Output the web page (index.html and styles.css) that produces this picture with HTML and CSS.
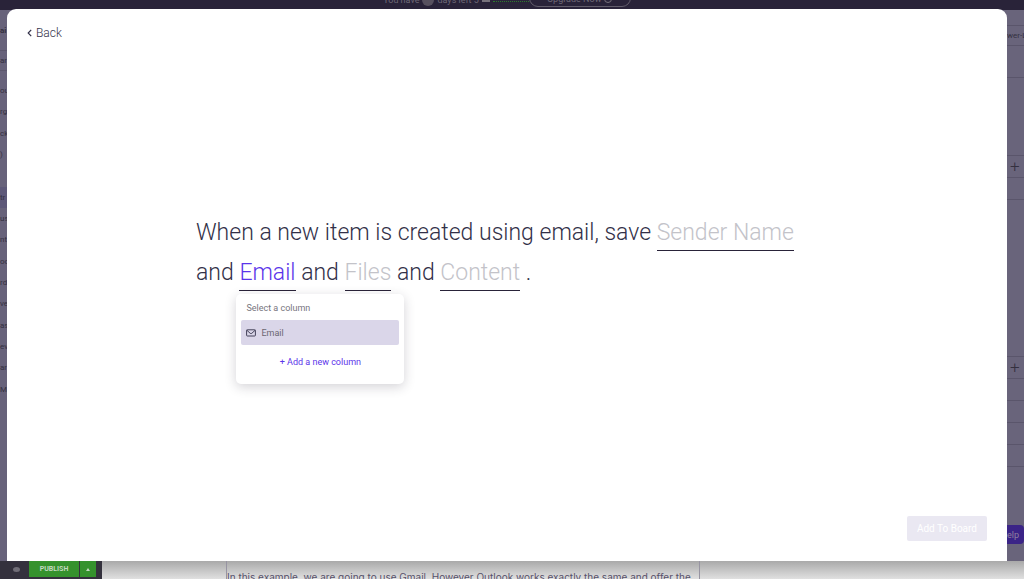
FILE: index.html
```html
<!DOCTYPE html>
<html lang="en">
  <head>
    <meta charset="UTF-8" />
    <title>Board automations</title>
    <link rel="stylesheet" href="styles.css">
  </head>
  <body>
    <div class="page">
      <header class="topbar">
        <div class="trial">You have <span class="trial-count"></span> days left 5 <span class="trial-mark"></span><span class="trial-dots"></span></div>
        <a class="upgrade" href="#">Upgrade Now <span class="upgrade-ring"></span></a>
      </header>

      <div class="workspace">
        <nav class="sidebar">
          <div class="side-title">ai</div>
          <div class="side-search">ar</div>
          <ul class="side-list">
            <li>ou</li>
            <li>rg</li>
            <li>ck</li>
            <li>)</li>
            <li></li>
            <li class="selected">tr</li>
            <li>us</li>
            <li>nt</li>
            <li>oo</li>
            <li>rd</li>
            <li>ve</li>
            <li>as</li>
            <li>ev</li>
            <li>ar</li>
            <li>M</li>
          </ul>
        </nav>
        <div class="board">
          <div class="board-tab">wer-L</div>
          <div class="board-gap"></div>
          <div class="board-group"></div>
          <div class="board-add">+</div>
          <div class="board-row"></div>
          <div class="board-group tall"></div>
          <div class="board-add">+</div>
          <div class="board-row"></div>
          <div class="board-row"></div>
          <div class="board-row"></div>
          <div class="board-row"></div>
          <div class="board-row"></div>
          <button class="help" type="button">elp</button>
        </div>
      </div>

      <footer class="article-strip">
        <div class="editor-bar">
          <span class="preview"></span>
          <button class="publish" type="button">PUBLISH</button>
          <button class="publish-more" type="button" aria-label="Save options"><svg width="4" height="3" viewBox="0 0 4 3"><path d="M0 3L2 0L4 3Z" fill="currentColor"/></svg></button>
        </div>
        <p class="article-text">In this example, we are going to use Gmail. However Outlook works exactly the same and offer the</p>
      </footer>
    </div>

    <main class="modal">
      <button class="back" type="button">
        <svg width="5" height="8" viewBox="0 0 5 8" fill="none" stroke="currentColor" stroke-width="1.2"><path d="M4.2 0.8L1.2 4L4.2 7.2"/></svg>
        Back
      </button>

      <div class="recipe">
        When a new item is created using email, save <button class="field" type="button">Sender Name</button>
        and <span class="field-wrap"><button class="field active" type="button">Email</button>
          <!-- column picker for the active field -->
          <span class="picker">
            <span class="picker-title">Select a column</span>
            <button class="picker-option" type="button">
              <svg width="10" height="8" viewBox="0 0 10 8" fill="none" stroke="currentColor" stroke-width="0.9"><rect x="0.6" y="0.8" width="8.8" height="6.2" rx="0.7"/><path d="M0.8 1.2L4.2 4.3Q5 4.9 5.8 4.3L9.2 1.2"/></svg>
              Email
            </button>
            <button class="picker-add" type="button">+ Add a new column</button>
          </span></span>
        and <button class="field" type="button">Files</button>
        and <button class="field" type="button">Content</button> .
      </div>

      <div class="modal-footer">
        <button class="submit" type="button" disabled>Add To Board</button>
      </div>
    </main>
  </body>
</html>
```
FILE: styles.css
```css
* { box-sizing: border-box; }
body {
    margin: 0;
    font-family: Roboto, "Liberation Sans", sans-serif;
    color: #323048;
}
button {
    margin: 0;
    padding: 0;
    border: 0;
    background: none;
    color: inherit;
    font: inherit;
}
.page {
    display: flex;
    flex-direction: column;
    height: 100vh;
    overflow: hidden;
}

/* Dimmed page behind the modal */
.topbar {
    display: flex;
    justify-content: center;
    align-items: flex-end;
    height: 10px;
    padding-right: 10px;
    overflow: hidden;
    background: #292339;
    color: #6d6876;
    font-size: 9px;
    line-height: 12px;
}
.trial {
    display: flex;
    align-items: center;
    gap: 3px;
    padding-bottom: 4px;
}
.trial-count {
    width: 12px;
    height: 12px;
    border-radius: 50%;
    background: #57515f;
}
.trial-mark {
    width: 8px;
    height: 4px;
    background: #77727c;
}
.trial-dots {
    width: 36px;
    height: 4px;
    border-bottom: 1px dotted #2c7a2c;
}
.upgrade {
    display: flex;
    align-items: center;
    justify-content: center;
    gap: 3px;
    width: 102px;
    height: 18px;
    margin-bottom: 3px;
    padding-top: 2px;
    border: 1px solid #625d6b;
    border-radius: 9px;
    color: inherit;
    text-decoration: none;
}
.upgrade-ring {
    width: 8px;
    height: 8px;
    border: 1px solid #77727c;
    border-radius: 50%;
}
.workspace {
    display: flex;
    flex: 1;
    justify-content: space-between;
    min-height: 0;
    background: #69647b;
    color: #34303f;
    font-size: 8px;
    overflow: hidden;
}
.sidebar {
    width: 7px;
    overflow: hidden;
    background: #67627a;
}
.side-title {
    height: 41px;
    border-bottom: 1px solid #5c576d;
    font-weight: 700;
    line-height: 42px;
}
.side-search {
    height: 20px;
    border-bottom: 1px solid #5c576d;
    line-height: 20px;
}
.side-list {
    display: grid;
    grid-auto-rows: 1fr;
    height: 320px;
    margin: 9px 0 0;
    padding: 0;
    list-style: none;
    line-height: 21px;
}
.side-list .selected { background: #5d5878; }
.board {
    display: flex;
    flex-direction: column;
    width: 17px;
    padding-top: 15px;
    overflow: hidden;
}
.board > div {
    flex-shrink: 0;
    border-top: 1px solid #5a556b;
}
.board-tab {
    height: 20px;
    line-height: 20px;
    white-space: nowrap;
}
.board-gap { height: 32px; }
.board-group { height: 78px; }
.board-group.tall { height: 157px; }
.board-add {
    height: 22px;
    padding-left: 3px;
    font-size: 17px;
    font-weight: 300;
    line-height: 21px;
}
.board-row { height: 22px; }
.help {
    flex-shrink: 0;
    height: 19px;
    margin-top: auto;
    margin-bottom: 17px;
    border-radius: 0 4px 4px 0;
    background: #3b2487;
    color: #91809f;
    font-size: 9px;
    text-align: left;
}
.article-strip {
    display: flex;
    height: 18px;
    overflow: hidden;
    background: linear-gradient(#a9a9a9, #e0e0e0);
}
.editor-bar {
    display: flex;
    flex-shrink: 0;
    gap: 1px;
    width: 102px;
    padding: 0 6px 2px 13px;
    background: #34313d;
    color: #c3d8c0;
}
.preview {
    width: 7px;
    height: 5px;
    margin: 6px 8px 0 0;
    border-radius: 50%;
    background: #716e78;
}
.publish {
    width: 50px;
    background: #35922d;
    font-size: 7px;
    font-weight: 700;
}
.publish-more {
    display: flex;
    flex: 1;
    align-items: center;
    justify-content: center;
    background: #35922d;
}
.article-text {
    width: 474px;
    margin: 0 0 0 124px;
    border: solid #9794a2;
    border-width: 0 1px;
    color: #57516a;
    font-family: Inter, sans-serif;
    font-size: 10px;
    line-height: 32px;
    white-space: nowrap;
}

/* Modal */
.modal {
    position: absolute;
    inset: 9px 17px 18px 7px;
    display: flex;
    flex-direction: column;
    align-items: stretch;
    padding: 16px 20px 20px;
    border-radius: 9px 9px 0 0;
    background: #fff;
}
.back {
    display: flex;
    align-items: center;
    align-self: flex-start;
    gap: 4px;
    font-size: 12px;
    font-weight: 300;
    line-height: 16px;
}
.recipe {
    width: 100%;
    max-width: 622px;
    margin: 172px auto 0;
    font-size: 23px;
    font-weight: 300;
    line-height: 40px;
}
.field {
    height: 36px;
    border-bottom: 1px solid #292339;
    color: #c3c3c9;
    line-height: 36px;
}
.field.active { color: #5b34ea; }
.field-wrap { position: relative; }
.picker {
    position: absolute;
    top: 35px;
    left: -3px;
    display: flex;
    flex-direction: column;
    width: 168px;
    padding: 6px 5px 14px;
    border-radius: 5px;
    background: #fff;
    box-shadow: 0 3px 12px rgba(41, 35, 57, 0.2);
    font-size: 9px;
    font-weight: 400;
    line-height: 16px;
}
.picker-title {
    padding-left: 5px;
    color: #77757e;
}
.picker-option {
    display: flex;
    align-items: center;
    gap: 5px;
    height: 25px;
    margin: 4px 0 9px;
    padding-left: 5px;
    border-radius: 2px;
    background: #dad6e9;
    color: #6a6772;
}
.picker-option svg { color: #323048; }
.picker-add { color: #5b34ea; }
.modal-footer {
    display: flex;
    justify-content: flex-end;
    margin-top: auto;
}
.submit {
    height: 25px;
    padding: 0 10px;
    border-radius: 2px;
    background: #eae8f2;
    color: #fff;
    font-size: 10px;
}
```
